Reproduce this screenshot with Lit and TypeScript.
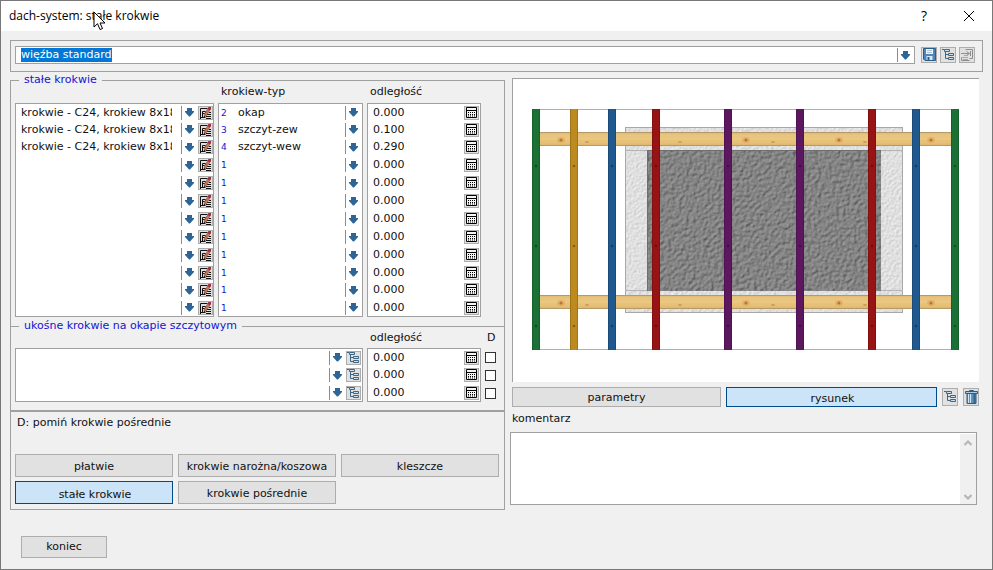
import { LitElement, html, svg, css } from "lit";
import { customElement, property, query } from "lit/decorators.js";

const arrow = html`<svg class="arrow" viewBox="0 0 9 9" aria-hidden="true">
  <path d="M2 0h5v3h2v1L5 8.500H4L0 4V3h2z" fill="#2f6496" />
</svg>`;

const icons: Record<string, unknown> = {
  tree: svg`<g fill="#cfe0ee" stroke="#3f6784">
      <path d="M3.500 1.500V9.500H7M3.500 5.500H7M0 .500h2" fill="none" />
      <path d="M2.500 .500h5v2h-5zM6.500 4.500h5v2h-5zM6.500 8.500h5v2h-5z" />
    </g>`,
  treeOff: svg`<g fill="none" stroke="#8e8e8e">
      <path d="M4.500 .500h7v9h-3M0 4.500h8M5.500 2.500l3 2-3 2M.500 8.500v3h8M9.500 2v5" />
      <path d="M1 8.500h6M3 6.500h4M2 10.500h5" stroke="#a8a8a8" />
    </g>`,
  save: svg`<path d="M.500 -.500h12v12H2L.500 10z" fill="#4f86bd" stroke="#2d5b86" />
      <path d="M3 0h7v5H3z" fill="#f2f7fb" />
      <path d="M4 1.500h5M4 3.500h5" stroke="#a9c2d8" />
      <path d="M3.500 7h6v4h-6z" fill="#dbe7f1" />
      <path d="M4.500 8h2v3h-2z" fill="#2d5b86" />`,
  edit: svg`<g fill="none" stroke="#111">
      <path d="M1.500 12V1.500h7M1.500 10.500h5M3.500 10V4.500h3v2h-3M8 7.500h4M7 9.500h5M7 11.500h5M10 5.500h2" />
    </g>
    <path d="M5 10l.500-3.500L9 1.500 11 3 7.500 8.500z" fill="#c07355" stroke="#7c4434" stroke-width=".500" />
    <path d="M8.500 1.500L9.500 0h2.500v2.500l-1.500 1z" fill="#a32b45" />
    <path d="M5 10.500l.300-2 1.200 1z" fill="#222" />`,
  calc: svg`<path d="M1.500 .500h10v10h-10zM1.500 3.500h10" fill="#f4f4f4" stroke="#000" />
    <path d="M3 5.500h7M3 7.500h7M3 9h7" stroke="#000" stroke-dasharray="1 1" />`,
  bin: svg`<path d="M2 2h9v10.500H2z" fill="#5f93bd" stroke="#2d5b86" />
    <path d="M3.500 3v9M5.500 3v9" stroke="#d5e6f3" />
    <path d="M9.500 3v9" stroke="#2f6691" stroke-width="2" />
    <path d="M4.500 0V-.500h4V0" fill="none" stroke="#2d5b86" />
    <path d="M.500 .500h12v2H.500z" fill="#a9cbe4" stroke="#2d5b86" />`,
};

const controls = css`
  *,
  *::before,
  *::after {
    box-sizing: border-box;
  }
  button,
  input,
  select,
  textarea {
    font: inherit;
    color: inherit;
    margin: 0;
    padding: 0;
    border: 0;
    border-radius: 0;
    outline: 0;
    background: transparent;
  }
`;

@customElement("tool-button")
class ToolButton extends LitElement {
  @property() icon = "tree";
  @property() label = "";
  @property() size = "small";

  static styles = [
    controls,
    css`
      :host {
        display: block;
        flex: none;
      }
      button {
        display: flex;
        align-items: center;
        justify-content: center;
        width: 15px;
        height: 14px;
        border: 1px solid #adadad;
        background: #e1e1e1;
      }
      .medium {
        width: 16px;
        height: 16px;
      }
      .tall {
        width: 16px;
        height: 18px;
      }
      svg {
        display: block;
        flex: none;
        width: 13px;
        height: 12px;
      }
      .medium svg,
      .tall svg {
        height: 14px;
      }
    `,
  ];

  render() {
    const box = this.size === "small" ? "0 0 13 12" : "0 -1 13 14";
    return html`<button type="button" class=${this.size} aria-label=${this.label}>
      <svg viewBox=${box} aria-hidden="true">${icons[this.icon]}</svg>
    </button>`;
  }
}

const posts = [
  { x: 19, color: "#1b7135" },
  { x: 57, color: "#bd8a1f" },
  { x: 95, color: "#20598f" },
  { x: 139, color: "#981414" },
  { x: 211, color: "#5c175f" },
  { x: 283, color: "#5c175f" },
  { x: 355, color: "#981414" },
  { x: 399, color: "#20598f" },
  { x: 438, color: "#1b7135" },
];

@customElement("roof-plan")
class RoofPlan extends LitElement {
  static styles = css`
    :host {
      display: block;
      background: #fff;
      border-top: 1px solid #a0a0a0;
      border-left: 1px solid #a0a0a0;
    }
    svg {
      display: block;
      width: 100%;
      height: auto;
    }
  `;

  private beam(y: number) {
    return svg`<rect x="27" y=${y} width="411" height="14" fill="url(#wood)" />
      <path d="M27 ${y + 0.5}H438M27 ${y + 13.5}H438" stroke="#b59a68" />
      <path d="M27 ${y + 5}H438M27 ${y + 9}H438" stroke="#dcae60" stroke-opacity=".3" />
      ${[48, 233, 326, 418].map(
        (x) => svg`<ellipse cx=${x} cy=${y + 8} rx="4" ry="3" fill="#dda558" fill-opacity=".6" />
          <circle cx=${x} cy=${y + 8} r="1.600" fill="#b87634" />`
      )}
      ${[74, 167, 260, 352].map(
        (x) => svg`<ellipse cx=${x} cy=${y + 10} rx="2" ry="1" fill="#d39a58" />`
      )}`;
  }

  render() {
    return html`<svg viewBox="0 0 466 303" role="img" aria-label="rysunek">
      <defs>
        <linearGradient id="wood" x1="0" y1="0" x2="0" y2="1">
          <stop offset="0" stop-color="#e0b870" />
          <stop offset=".35" stop-color="#ebca86" />
          <stop offset=".7" stop-color="#e8c47c" />
          <stop offset="1" stop-color="#ddb266" />
        </linearGradient>
        <filter id="stone" x="0" y="0" width="1" height="1" color-interpolation-filters="sRGB">
          <feTurbulence type="fractalNoise" baseFrequency=".28" numOctaves="2" seed="4" />
          <feColorMatrix values="0 0 0 0 0  0 0 0 0 0  0 0 0 0 0  1 0 0 0 0" />
          <feDiffuseLighting surfaceScale="1.100" diffuseConstant=".75" lighting-color="#ccc">
            <feDistantLight azimuth="225" elevation="60" />
          </feDiffuseLighting>
        </filter>
        <filter id="plaster" x="0" y="0" width="1" height="1" color-interpolation-filters="sRGB">
          <feTurbulence type="fractalNoise" baseFrequency=".4" numOctaves="2" seed="9" />
          <feColorMatrix values="0 0 0 0 0  0 0 0 0 0  0 0 0 0 0  1 0 0 0 0" />
          <feDiffuseLighting surfaceScale=".450" diffuseConstant="1.020" lighting-color="#f2f2f2">
            <feDistantLight azimuth="225" elevation="65" />
          </feDiffuseLighting>
        </filter>
      </defs>
      <path d="M19 30.500H446M19 270.500H446" stroke="#a6abe8" />
      <rect x="112" y="48" width="278" height="186" filter="url(#plaster)" />
      <rect x="112.500" y="48.500" width="277" height="185" fill="none" stroke="#a8a8a8" />
      <path d="M112 71.500H390M112 211.500H390" stroke="#b4b4b4" />
      <rect x="134" y="71" width="234" height="141" filter="url(#stone)" />
      <path d="M134.500 71V212M134 71.500H368" stroke="#6e6e6e" />
      ${this.beam(53)} ${this.beam(216)}
      ${posts.map(
        (p) => svg`<rect x=${p.x} y="30" width="8" height="241" fill=${p.color} />
          <path d="M${p.x + 0.5} 30v241M${p.x + 7.5} 30v241" stroke="#000" stroke-opacity=".15" />
          ${[87, 167, 247].map(
            (y) => svg`<circle cx=${p.x + 4} cy=${y} r="1.300" fill="#000" fill-opacity=".3" />`
          )}`
      )}
    </svg>`;
  }
}

const rafter = "krokwie - C24, krokiew 8x18";
const rows = [
  { name: rafter, no: 2, type: "okap", dist: "0.000" },
  { name: rafter, no: 3, type: "szczyt-zew", dist: "0.100" },
  { name: rafter, no: 4, type: "szczyt-wew", dist: "0.290" },
  ...Array.from({ length: 9 }, () => ({ name: "", no: 1, type: "", dist: "0.000" })),
];

@customElement("app-root")
class AppRoot extends LitElement {
  @query(".preset") preset!: HTMLInputElement;

  static styles = [
    controls,
    css`
      :host {
        display: block;
        box-sizing: border-box;
        min-height: 100vh;
        position: relative;
        border: 1px solid #787878;
        background: #f0f0f0;
        color: #111;
        font: 11px/14px "DejaVu Sans", Verdana, sans-serif;
      }
      .titlebar {
        display: flex;
        align-items: center;
        height: 30px;
        padding: 0 17px 0 8px;
        background: #fff;
        color: #000;
      }
      .title {
        flex: 1;
        margin: 0;
        font: 12px/16px "Open Sans", "Segoe UI", sans-serif;
      }
      .winbtn {
        width: 12px;
        height: 16px;
        font: 14px/16px "Open Sans", "Segoe UI", sans-serif;
      }
      .winbtn + .winbtn {
        display: flex;
        align-items: center;
        margin-left: 33px;
      }
      .winbtn svg {
        display: block;
        width: 12px;
        height: 12px;
      }
      .pointer {
        position: absolute;
        left: 92px;
        top: 10px;
        width: 13px;
        height: 20px;
        pointer-events: none;
      }
      .selector {
        display: flex;
        align-items: center;
        margin: 9px 9px 0;
        padding: 5px 7px 7px 4px;
        border: 1px solid #a0a0a0;
      }
      .selector .field {
        flex: 1;
        margin-right: 6px;
        height: 18px;
        border: 1px solid #a0a0a0;
        background: #fff;
      }
      .tools {
        display: flex;
        gap: 3px;
      }
      .preset::selection {
        background: #0078d7;
        color: #fff;
      }
      .main {
        display: grid;
        grid-template-columns: minmax(0, 495fr) minmax(0, 469fr);
        gap: 5px;
        align-items: start;
        padding: 0 13px 0 9px;
      }
      fieldset {
        min-width: 0;
        margin: 0;
        padding: 0;
        border: 1px solid #a0a0a0;
      }
      .fixed {
        margin-top: 1px;
        padding-bottom: 9px;
        border-bottom: 0;
      }
      .diagonal {
        margin-top: -7px;
        padding-bottom: 8px;
      }
      legend {
        margin-left: 8px;
        padding: 0 5px;
        line-height: 14px;
        color: #1414d2;
      }
      table {
        width: 100%;
        table-layout: fixed;
        border-collapse: separate;
        border-spacing: 4px 0;
      }
      .fixed .wrap {
        padding-right: 19px;
      }
      th {
        height: 15px;
        padding: 0 3px;
        font-weight: normal;
        line-height: 10px;
        text-align: left;
        vertical-align: top;
        white-space: nowrap;
      }
      .fixed th {
        height: 16px;
      }
      .type {
        width: 145px;
      }
      .dist {
        width: 114px;
      }
      .skip {
        width: 15px;
      }
      th.skip {
        padding: 0 2px;
      }
      td {
        height: 18px;
        padding: 0;
        vertical-align: middle;
      }
      .fixed tr:nth-child(8n + 2) td {
        height: 17px;
      }
      .box {
        border: 0 solid #a0a0a0;
        border-width: 0 1px;
        background: #fff;
      }
      tr:first-child .box {
        border-top-width: 1px;
      }
      tr:last-child .box {
        border-bottom-width: 1px;
      }
      .box:not(:first-child) tool-button,
      .diagonal tool-button {
        margin-right: 1px;
      }
      .field {
        display: flex;
        align-items: center;
        min-width: 0;
      }
      .field input,
      .combo select {
        flex: 1;
        min-width: 0;
        width: 100%;
        height: 14px;
        padding-left: 5px;
        line-height: 14px;
      }
      .combo {
        position: relative;
        display: flex;
        flex: 1;
        min-width: 0;
      }
      .combo select {
        appearance: none;
        padding-right: 26px;
      }
      .drop {
        display: flex;
        align-items: center;
        flex: none;
        width: 17px;
        height: 14px;
        padding-left: 3px;
        border-left: 1px solid #8c8c8c;
        background: #fff;
      }
      .combo .drop {
        position: absolute;
        right: 0;
        top: 0;
        pointer-events: none;
      }
      .arrow {
        display: block;
        width: 9px;
        height: 9px;
      }
      .no {
        flex: none;
        width: 14px;
        padding-left: 2px;
        font-size: 9px;
        color: #1414d2;
      }
      .skip input {
        display: block;
        appearance: none;
        width: 11px;
        height: 11px;
        border: 1px solid #333;
        background: #fff;
      }
      .pages {
        border: 1px solid #a0a0a0;
        padding: 4px 5px 5px 4px;
      }
      .note {
        margin: 0 0 24px 2px;
      }
      .tabs {
        display: grid;
        grid-template-columns: repeat(3, minmax(0, 1fr));
        gap: 4px 5px;
      }
      .btn {
        height: 23px;
        padding-top: 2px;
        border: 1px solid #adadad;
        background: #e1e1e1;
        text-align: center;
        white-space: nowrap;
      }
      .btn.on {
        padding: 4px 0 0 2px;
        border-color: #00498a;
        background: #cce4f7;
      }
      .view .btn {
        flex: 1;
        height: 20px;
      }
      .close {
        width: 86px;
        height: 22px;
        padding: 0;
        margin: 26px 0 0 11px;
      }
      .right {
        padding-top: 6px;
      }
      roof-plan {
        margin-left: 2px;
      }
      .view {
        display: flex;
        align-items: center;
        gap: 5px;
        margin: 5px 0 5px 2px;
      }
      .comment-label {
        display: block;
        margin-left: 2px;
      }
      .comment {
        display: flex;
        height: 73px;
        margin: 6px 2px 0 0;
        border: 1px solid #a0a0a0;
        background: #fff;
      }
      .comment textarea {
        flex: 1;
        min-width: 0;
        padding: 4px;
        resize: none;
        overflow: hidden;
      }
      .scroll {
        display: flex;
        flex-direction: column;
        justify-content: space-between;
        align-items: center;
        width: 16px;
        margin-top: 1px;
        padding: 6px 0 4px;
        background: #f0f0f0;
      }
      .scroll svg {
        display: block;
        width: 8px;
        height: 6px;
      }
    `,
  ];

  firstUpdated() {
    this.preset.focus();
    this.preset.select();
  }

  private combo(label: string, value: string) {
    return html`<span class="combo">
      <select aria-label=${label}>
        <option>${value}</option>
      </select>
      <span class="drop">${arrow}</span>
    </span>`;
  }

  private distance(value: string) {
    return html`<td class="box">
      <div class="field">
        <input aria-label="odległość" .value=${value} />
        <tool-button icon="calc" label="kalkulator"></tool-button>
      </div>
    </td>`;
  }

  render() {
    return html`
      <header class="titlebar">
        <h1 class="title">dach-system: stałe krokwie</h1>
        <button class="winbtn" type="button">?</button>
        <button class="winbtn" type="button" aria-label="zamknij">
          <svg viewBox="0 0 12 12"><path d="M1 1l10 10M11 1L1 11" stroke="#000" /></svg>
        </button>
      </header>

      <div class="selector">
        <div class="field">
          <input class="preset" aria-label="szablon" value="więźba standard" />
          <button class="drop" type="button" aria-label="rozwiń">${arrow}</button>
        </div>
        <div class="tools">
          <tool-button size="medium" icon="save" label="zapisz"></tool-button>
          <tool-button size="medium" icon="tree" label="drzewo"></tool-button>
          <tool-button size="medium" icon="treeOff" label="wstaw"></tool-button>
        </div>
      </div>

      <main class="main">
        <div>
          <fieldset class="fixed">
            <legend>stałe krokwie</legend>
            <div class="wrap">
              <table>
                <thead>
                  <tr>
                    <th></th>
                    <th class="type">krokiew-typ</th>
                    <th class="dist">odległość</th>
                  </tr>
                </thead>
                <tbody>
                  ${rows.map(
                    (r) => html`<tr>
                      <td class="box">
                        <div class="field">
                          ${this.combo("krokwie", r.name)}
                          <tool-button icon="edit" label="edytuj"></tool-button>
                        </div>
                      </td>
                      <td class="box">
                        <div class="field">
                          <span class="no">${r.no}</span>${this.combo("krokiew-typ", r.type)}
                        </div>
                      </td>
                      ${this.distance(r.dist)}
                    </tr>`
                  )}
                </tbody>
              </table>
            </div>
          </fieldset>

          <fieldset class="diagonal">
            <legend>ukośne krokwie na okapie szczytowym</legend>
            <table>
              <thead>
                <tr>
                  <th></th>
                  <th class="dist">odległość</th>
                  <th class="skip">D</th>
                </tr>
              </thead>
              <tbody>
                ${[0, 1, 2].map(
                  () => html`<tr>
                    <td class="box">
                      <div class="field">
                        ${this.combo("ukośne krokwie", "")}
                        <tool-button icon="tree" label="drzewo"></tool-button>
                      </div>
                    </td>
                    ${this.distance("0.000")}
                    <td class="skip"><input type="checkbox" aria-label="D" /></td>
                  </tr>`
                )}
              </tbody>
            </table>
          </fieldset>

          <section class="pages">
            <p class="note">D: pomiń krokwie pośrednie</p>
            <nav class="tabs">
              <button class="btn" type="button">płatwie</button>
              <button class="btn" type="button">krokwie narożna/koszowa</button>
              <button class="btn" type="button">kleszcze</button>
              <button class="btn on" type="button">stałe krokwie</button>
              <button class="btn" type="button">krokwie pośrednie</button>
            </nav>
          </section>

          <button class="btn close" type="button">koniec</button>
        </div>

        <div class="right">
          <roof-plan></roof-plan>
          <div class="view">
            <button class="btn" type="button">parametry</button>
            <button class="btn on" type="button">rysunek</button>
            <tool-button size="tall" icon="tree" label="drzewo"></tool-button>
            <tool-button size="tall" icon="bin" label="usuń"></tool-button>
          </div>
          <label class="comment-label" for="comment">komentarz</label>
          <div class="comment">
            <textarea id="comment"></textarea>
            <div class="scroll" aria-hidden="true">
              <svg viewBox="0 0 8 6"><path d="M.500 5L4 1.500 7.500 5" fill="none" stroke="#b4b4b4" stroke-width="2" /></svg>
              <svg viewBox="0 0 8 6"><path d="M.500 1L4 4.500 7.500 1" fill="none" stroke="#b4b4b4" stroke-width="2" /></svg>
            </div>
          </div>
        </div>
      </main>

      <svg class="pointer" viewBox="0 0 13 20" aria-hidden="true">
        <path d="M1 1v15l3.500-3.300L7 18.500l2.500-1L7 12h5z" fill="#fff" stroke="#000" />
      </svg>
    `;
  }
}
